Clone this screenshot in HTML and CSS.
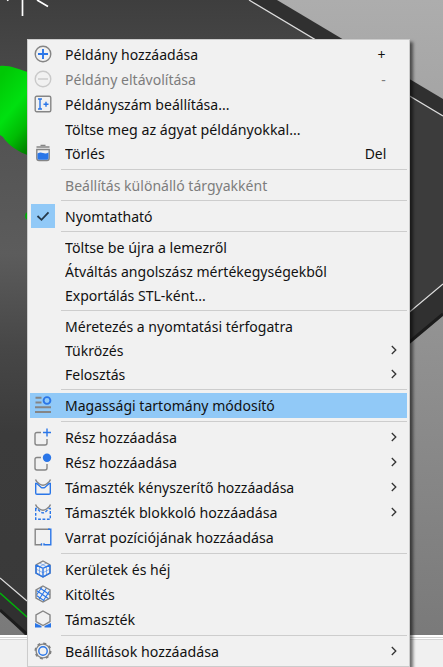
FILE: index.html
```
<!DOCTYPE html>
<html lang="hu">
<head>
<meta charset="utf-8">
<title>Helyi menü</title>
<link rel="stylesheet" href="styles.css">
</head>
<body>
<svg class="scene" viewBox="0 0 443 667" width="443" height="667" aria-hidden="true">
  <defs>
    <linearGradient id="bg" x1="0" y1="0" x2="0" y2="1"><stop offset="0" stop-color="#adadad"/><stop offset="1" stop-color="#777"/></linearGradient>
    <linearGradient id="bed" x1="0" y1="0" x2="0" y2="667" gradientUnits="userSpaceOnUse"><stop offset="0" stop-color="#3e3e3e"/><stop offset=".22" stop-color="#545454"/><stop offset=".38" stop-color="#5c5c5c"/><stop offset=".52" stop-color="#474747"/><stop offset=".65" stop-color="#3b3b3b"/><stop offset="1" stop-color="#393939"/></linearGradient>
    <linearGradient id="green" x1=".3" y1="0" x2=".7" y2="1"><stop offset="0" stop-color="#00c805"/><stop offset=".45" stop-color="#00e010"/><stop offset=".75" stop-color="#00bc04"/><stop offset="1" stop-color="#008400"/></linearGradient>
  </defs>
  <rect width="443" height="667" fill="url(#bg)"/>
  <path d="M0 0H277L443 99V314L30 640L0 611Z" fill="#303030"/>
  <path d="M0 0H249L443 116V284L40 610V220L27 601L0 578Z" fill="#3c3c3c"/>
  <path d="M0 0H249L315 39H27V601L0 578Z" fill="url(#bed)"/>
  <path d="M249 0L443 116M443 284L400 320M0 578L27 601" stroke="#ddd" stroke-width="1.200" fill="none"/>
  <path d="M443 314L400 350M0 610L27 634" stroke="#1c1c1c" stroke-width="3" fill="none"/>
  <path d="M0 593L27 617" stroke="#00b40a" stroke-width="1.5"/>
  <path d="M22.5 0V16M37 0L48 6.5M8.500 -.5L7 .5" stroke="#fff" stroke-width="1.7"/>
  <path d="M0 66C9 65 18 69 30 73V156C18 152 8 145 3 137L0 135Z" fill="url(#green)"/>
  <circle cx="29" cy="216" r="4" fill="#00aa08"/>
  <path d="M0 635H443V667H0Z" fill="#f0f0f0"/>
  <path d="M0 635H443V639H0Z" fill="#fff"/>
  <path d="M0 637.5H443M0 639.5H443" stroke="#d5d5d5"/>
</svg>

<svg class="defs" aria-hidden="true">
  <symbol id="chev" viewBox="0 0 6 10"><path d="M.8 1L4.8 5L.8 9" fill="none" stroke="#333" stroke-width="1.3"/></symbol>
</svg>

<nav class="menu">
  <div class="row"><span class="ico"><svg viewBox="0 0 18 18"><circle class="g" cx="9" cy="9" r="7.8"/><path class="b w2" d="M9 4V14M4 9H14"/></svg></span><span class="label tight">Példány hozzáadása</span><span class="key">+</span></div>
  <div class="row off"><span class="ico"><svg viewBox="0 0 18 18"><circle class="l" cx="9" cy="9" r="7.8"/><path class="l" d="M4 9H14"/></svg></span><span class="label tight">Példány eltávolítása</span><span class="key">-</span></div>
  <div class="row"><span class="ico"><svg viewBox="0 0 18 18"><rect class="g" x="1.2" y="1.2" width="15.6" height="15.6" rx="1.5"/><path class="b" d="M4 4H8M6 4V14M4 14H8M9.5 9.3H14.5M12 6.8V11.8"/></svg></span><span class="label tight">Példányszám beállítása...</span></div>
  <div class="row short"><span class="ico"></span><span class="label">Töltse meg az ágyat példányokkal...</span></div>
  <div class="row"><span class="ico"><svg viewBox="0 0 18 18"><path class="g" d="M2.500 3H15.500M6.500 1.400H11.500M2.800 5.500V14Q2.800 16.500 5 16.500H13Q15.200 16.500 15.200 14V5.500Z"/><path class="f" d="M3.500 9.500Q6 8 9 9Q12 10 14.500 8.500V14Q14.500 15.800 13 15.800H5Q3.500 15.800 3.500 14Z"/></svg></span><span class="label">Törlés</span><span class="key">Del</span></div>
  <hr>
  <div class="row short off"><span class="ico"></span><span class="label tight">Beállítás különálló tárgyakként</span></div>
  <hr>
  <div class="row short"><span class="ico check"><svg viewBox="0 0 18 18"><path d="M3.500 9L7.500 12.800L14.500 5.300" fill="none" stroke="#26394a" stroke-width="1.8"/></svg></span><span class="label tight">Nyomtatható</span></div>
  <hr>
  <div class="row short"><span class="ico"></span><span class="label">Töltse be újra a lemezről</span></div>
  <div class="row short"><span class="ico"></span><span class="label tight">Átváltás angolszász mértékegységekből</span></div>
  <div class="row short"><span class="ico"></span><span class="label tight">Exportálás STL-ként...</span></div>
  <hr>
  <div class="row short"><span class="ico"></span><span class="label tight">Méretezés a nyomtatási térfogatra</span></div>
  <div class="row short"><span class="ico"></span><span class="label tight">Tükrözés</span><svg class="chev"><use href="#chev"/></svg></div>
  <div class="row short"><span class="ico"></span><span class="label tight">Felosztás</span><svg class="chev"><use href="#chev"/></svg></div>
  <hr>
  <div class="row active"><span class="ico"><svg viewBox="0 0 18 18"><path class="g w2" d="M1.500 1.800H7.500M1.500 6.500H7.500M1 11.200H17M1 16H17"/><circle class="b w2" cx="13" cy="4.500" r="3.400"/></svg></span><span class="label tight">Magassági tartomány módosító</span></div>
  <hr>
  <div class="row"><span class="ico"><svg viewBox="0 0 18 18"><path class="g" d="M7 4.500H3Q1 4.500 1 6.500V15Q1 17 3 17H11Q13 17 13 15V11"/><path class="b" d="M9 4.500H17M13 .5V8.500"/></svg></span><span class="label">Rész hozzáadása</span><svg class="chev"><use href="#chev"/></svg></div>
  <div class="row"><span class="ico"><svg viewBox="0 0 18 18"><path class="g" d="M7 4.500H3Q1 4.500 1 6.500V15Q1 17 3 17H11Q13 17 13 15V11"/><circle class="f" cx="13" cy="4.800" r="4.200"/></svg></span><span class="label">Rész hozzáadása</span><svg class="chev"><use href="#chev"/></svg></div>
  <div class="row"><span class="ico"><svg viewBox="0 0 18 18"><path class="g" d="M1.500 1.500Q2 3.500 5.500 6Q9 8.500 12.500 6Q16 3.500 16.500 1.500"/><path class="b" d="M1.700 5.500V15Q1.700 16.300 3 16.300H15Q16.300 16.300 16.300 15V5.500H15.200L11 9.300Q9 10.500 7 9.300L2.800 5.500Z"/></svg></span><span class="label tight">Támaszték kényszerítő hozzáadása</span><svg class="chev"><use href="#chev"/></svg></div>
  <div class="row"><span class="ico"><svg viewBox="0 0 18 18"><path class="g" d="M1.500 1.500Q2 3.500 5.500 6Q9 8.500 12.500 6Q16 3.500 16.500 1.500"/><path class="b" stroke-dasharray="2.800 1.600" d="M1.700 5.500V16.300H16.300V5.500H15.200L11 9.300Q9 10.500 7 9.300L2.800 5.500Z"/></svg></span><span class="label">Támaszték blokkoló hozzáadása</span><svg class="chev"><use href="#chev"/></svg></div>
  <div class="row"><span class="ico"><svg viewBox="0 0 18 18"><path class="g" d="M7.500 16.800H1.200V1.200H16"/><path class="b" d="M10 16.800H16.800V1.200H14M10 15.300V17.400M7.500 15.300V17.400"/></svg></span><span class="label">Varrat pozíciójának hozzáadása</span></div>
  <hr>
  <div class="row"><span class="ico"><svg viewBox="0 0 18 18"><path class="b cell" d="M5.500 3L12.500 6.700M12.500 3L5.500 6.700M5.500 7V15M12.500 7V15M2 9L9 12.700L16 9"/><path class="g" d="M9 1L16 4.800V13L9 17L2 13V4.800Z"/><path class="b" d="M2 5L9 8.300L16 5M9 8.300V17M2 5V13L9 17L16 13V5"/></svg></span><span class="label tight">Kerületek és héj</span></div>
  <div class="row"><span class="ico"><svg viewBox="0 0 18 18"><path class="b thin" d="M2.500 5.500L15 14M6 3L16 10M2.500 10.500L10.500 16M8 2L2.500 10M12.500 3L5 14.500M15.500 6L9.500 15.500"/><path class="g" d="M9 1L16 4.800V13L9 17L2 13V4.800Z"/></svg></span><span class="label">Kitöltés</span></div>
  <div class="row"><span class="ico"><svg viewBox="0 0 18 18"><path class="g" d="M9 1L16 5V11.500L9 15.500L2 11.500V5Z"/><path class="f" d="M1 13L7.500 16V17.500H1ZM17 13L10.500 16V17.500H17Z"/></svg></span><span class="label">Támaszték</span></div>
  <hr>
  <div class="row"><span class="ico"><svg viewBox="0 0 18 18"><circle class="g" cx="9" cy="9" r="6.900"/><circle cx="9" cy="9" r="7.700" fill="none" stroke="#7f7f7f" stroke-width="1.600" stroke-dasharray="3 3.048"/><circle class="b" cx="9" cy="9" r="4.200"/></svg></span><span class="label">Beállítások hozzáadása</span><svg class="chev"><use href="#chev"/></svg></div>
</nav>
</body>
</html>
```
FILE: styles.css
```
* { box-sizing: border-box; }
body {
  margin: 0;
  width: 443px;
  height: 667px;
  overflow: hidden;
  position: relative;
  font: 15px/24px "Noto Sans", sans-serif;
  color: #111;
}
.scene { display: block; }
.defs { position: absolute; width: 0; height: 0; }
.menu {
  position: absolute;
  left: 27px;
  top: 39px;
  width: 383px;
  height: 628px;
  padding: 2px;
  background: #f1f1f1;
  border: 1px solid #ccc;
  box-shadow: 3px 3px 3px rgba(0, 0, 0, .55);
}
.row {
  display: flex;
  align-items: center;
  height: 25px;
  padding: 0 7px 1px 0;
}
.row.short { height: 24px; padding-bottom: 0; }
.row.off { color: #7d7d7d; }
.row.active { background: #91c9f7; }
.ico {
  flex: none;
  width: 24px;
  height: 24px;
  margin: 0 10px 0 1px;
  display: grid;
  place-items: center;
}
.ico svg { width: 18px; height: 18px; }
.check { background: #91c9f7; }
.label {
  flex: 1;
  white-space: nowrap;
  transform: scaleX(.947);
  transform-origin: left;
}
.label.tight { transform: scaleX(.936); }
.key {
  margin-right: 14px;
  transform: scaleX(.93);
  transform-origin: right;
}
.chev { width: 6px; height: 10px; margin-right: 3px; }
hr {
  height: 7px;
  margin: 0 0 0 31px;
  border: 0;
  background: linear-gradient(#cdcdcd, #cdcdcd) 0 3px / 100% 1px no-repeat;
}
.g, .b, .l { fill: none; stroke-width: 1.4; }
.g { stroke: #858585; }
.b { stroke: #2a76e8; }
.l { stroke: #c9c9c9; }
.f { fill: #2a76e8; }
.w2 { stroke-width: 1.9; }
.thin { stroke-width: 1.1; }
.cell { stroke-width: .7; opacity: .7; }
```
